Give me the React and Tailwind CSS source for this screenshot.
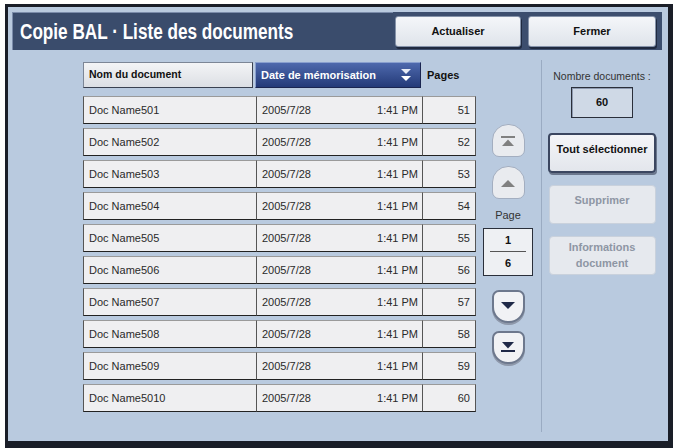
import React from "react";

const rows = Array.from({ length: 10 }, (_, i) => ({
  name: `Doc Name50${i + 1}`,
  date: "2005/7/28",
  time: "1:41 PM",
  pages: 51 + i,
}));

const sans = { fontFamily: '"Liberation Sans", Arial, sans-serif' };

function TopButton({ children }) {
  return (
    <button className="h-[31px] rounded-[3px] border border-[#8593aa] bg-gradient-to-b from-[#f4f6f9] to-[#dfe4eb] text-[11px] font-bold text-[#111] shadow-[1px_2px_0_#1f2a40]">
      {children}
    </button>
  );
}

function UpButton({ double }) {
  return (
    <div className="flex h-[33px] w-[33px] flex-col items-center justify-center rounded-t-[16px] rounded-b-[7px] border border-[#a3aec0] bg-[#e9ebef]">
      <svg width="16" height="12" viewBox="0 0 16 12">
        {double && <rect x="1" y="1" width="14" height="2" fill="#808080" />}
        <polygon points={double ? "2,11 14,11 8,4.5" : "1,10 15,10 8,3"} fill="#808080" />
      </svg>
    </div>
  );
}

function DownButton({ double }) {
  return (
    <div className="flex h-[33px] w-[33px] flex-col items-center justify-center rounded-t-[7px] rounded-b-[16px] border-2 border-[#6d788d] bg-[#f1f2f5] shadow-[0_2px_0_#8e98aa]">
      <svg width="16" height="12" viewBox="0 0 16 12">
        <polygon points={double ? "2,1 14,1 8,7.5" : "1,2 15,2 8,9"} fill="#1f2948" />
        {double && <rect x="1" y="9" width="14" height="2" fill="#1f2948" />}
      </svg>
    </div>
  );
}

export default function App() {
  return (
    <div className="h-[448px] w-[673px] bg-white pl-[5px] pt-[4px]" style={sans}>
      <div className="flex h-full flex-col border-b-[7px] border-l-[3px] border-r-[5px] border-t-[3px] border-[#1a1e28] bg-[#b9cadf]">
        {/* header */}
        <div className="ml-[4px] mr-[6px] mt-[5px] flex h-[38px] items-center bg-[#3c4e6e]">
          <div className="flex h-full w-[381px] items-center overflow-hidden border-l border-t border-[#7b8cab] border-b-[#27344c] bg-[#3a4c6c] pl-[7px]">
            <span className="origin-left scale-x-[0.78] whitespace-nowrap text-[22px] font-bold text-white">
              Copie BAL · Liste des documents
            </span>
          </div>
          <div className="ml-[2px] grid w-[261px] grid-cols-[126px_128px] gap-[7px]">
            <TopButton>Actualiser</TopButton>
            <TopButton>Fermer</TopButton>
          </div>
        </div>

        {/* body */}
        <div className="flex flex-1">
          {/* table */}
          <div className="ml-[75px] mt-[12px] w-[393px]">
            <div className="flex h-[26px] items-center">
              <div className="flex h-full w-[170px] items-center border border-[#7c8696] border-b-[#3a4150] border-r-[#3a4150] bg-gradient-to-b from-[#f3f4f6] to-[#dcdfe4] pl-[5px] text-[10.5px] font-bold text-[#111]">
                Nom du document
              </div>
              <div className="ml-[2px] flex h-full w-[166px] items-center justify-between border border-[#8aa0cf] border-b-[#1a2550] border-r-[#1a2550] bg-gradient-to-b from-[#4e69ad] to-[#243a78] pl-[5px] pr-[8px] text-[11px] font-bold text-white">
                Date de mémorisation
                <svg width="12" height="14" viewBox="0 0 12 14">
                  <polygon points="1,1 11,1 6,6" fill="#e8ecf6" />
                  <polygon points="1,8 11,8 6,13" fill="#ffffff" />
                </svg>
              </div>
              <div className="ml-[6px] text-[11px] font-bold text-[#111]">Pages</div>
            </div>
            <div className="mt-[8px] flex flex-col gap-[4px]">
              {rows.map((r) => (
                <div key={r.name} className="flex h-[28px] text-[11px] text-[#2a2a2a]">
                  <div className="flex w-[174px] items-center border border-[#555] border-b-[#222] border-t-[#9a9a9a] bg-[#efeff1] pl-[5px]">
                    {r.name}
                  </div>
                  <div className="flex w-[166px] items-center justify-between border-y border-r border-[#555] border-b-[#222] border-t-[#9a9a9a] bg-[#efeff1] pl-[5px] pr-[4px]">
                    <span>{r.date}</span>
                    <span>{r.time}</span>
                  </div>
                  <div className="flex w-[53px] items-center justify-end border-y border-r border-[#555] border-b-[#222] border-t-[#9a9a9a] bg-[#efeff1] pr-[5px]">
                    {r.pages}
                  </div>
                </div>
              ))}
            </div>
          </div>

          {/* scroll column */}
          <div className="ml-[7px] flex w-[50px] flex-col items-center pt-[74px]">
            <UpButton double />
            <div className="mt-[9px]">
              <UpButton />
            </div>
            <div className="mt-[8px] text-[11px] text-[#333]">Page</div>
            <div className="mt-[4px] flex h-[48px] w-[50px] flex-col items-center justify-center border border-[#2a2f3a] bg-[#eef0f3] text-[11px] font-bold text-[#111]">
              <span>1</span>
              <span className="my-[3px] h-px w-[36px] bg-[#555]" />
              <span>6</span>
            </div>
            <div className="mt-[14px]">
              <DownButton />
            </div>
            <div className="mt-[8px]">
              <DownButton double />
            </div>
          </div>

          {/* separator */}
          <div className="mb-[9px] ml-[8px] mt-[10px] w-px bg-[#9aabc2]" />

          {/* right panel */}
          <div className="ml-[6px] flex w-[108px] flex-col items-center pt-[19px]">
            <div className="text-[10.5px] text-[#333]">Nombre documents :</div>
            <div className="mt-[2px] flex h-[31px] w-[62px] items-center justify-center border border-[#2a2f3a] bg-[#cfd9e6] text-[11px] font-bold text-[#111] shadow-[inset_1px_1px_0_#8e9ab0]">
              60
            </div>
            <div className="mt-[15px] flex h-[40px] w-[108px] justify-center rounded-[4px] border-2 border-[#3b4660] bg-gradient-to-b from-[#f4f5f8] to-[#e3e6ec] pt-[6px] text-[11px] font-bold text-[#111] shadow-[1px_2px_0_#6b778d]">
              Tout sélectionner
            </div>
            <div className="mt-[12px] flex h-[39px] w-[107px] justify-center rounded-[4px] border border-[#c9d1dc] bg-[#e6e9ee] pt-[6px] text-[11px] font-bold text-[#8e96a4]">
              Supprimer
            </div>
            <div className="mt-[12px] flex h-[39px] w-[107px] flex-col items-center justify-center rounded-[4px] border border-[#c9d1dc] bg-[#e6e9ee] text-[11px] font-bold leading-[16px] text-[#8e96a4]">
              <span>Informations</span>
              <span>document</span>
            </div>
          </div>
        </div>
      </div>
    </div>
  );
}
